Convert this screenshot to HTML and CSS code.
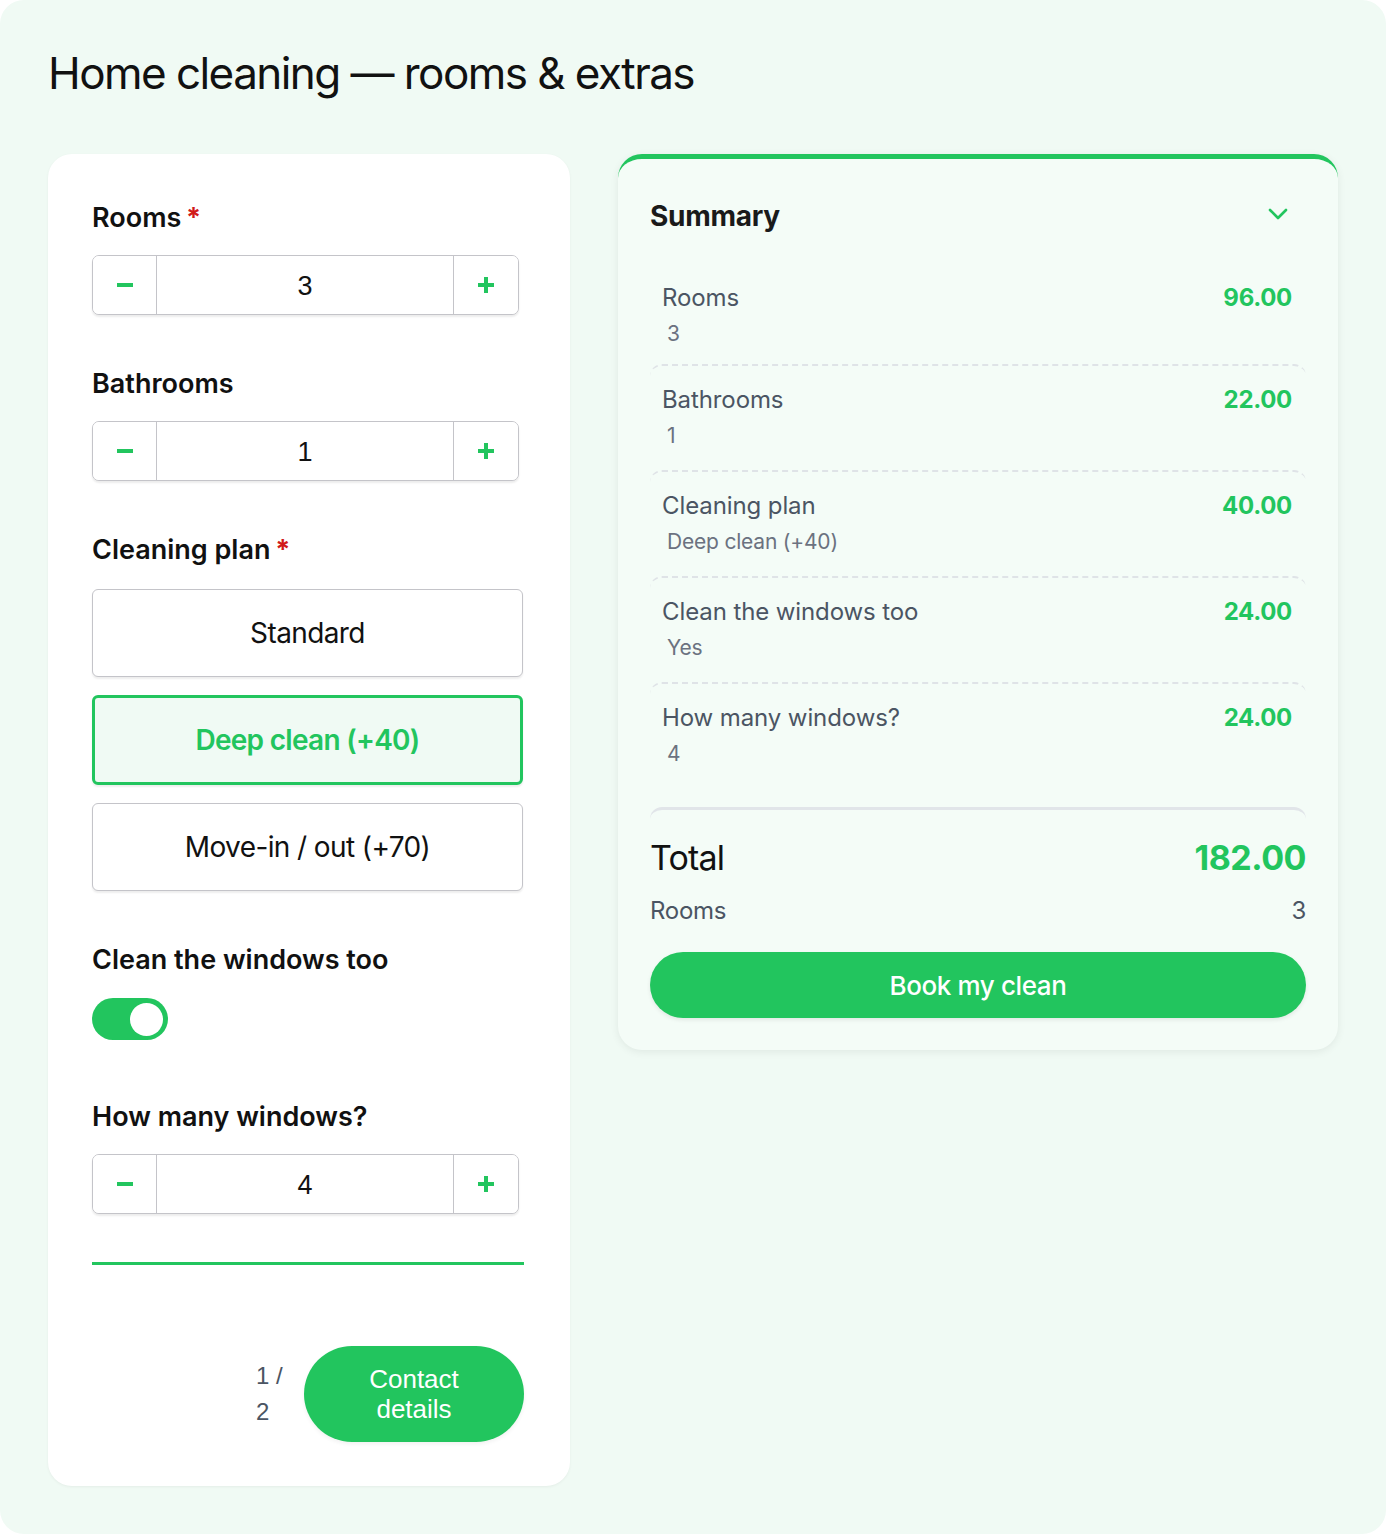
FILE: index.html
```html
<!DOCTYPE html>
<html lang="en">
<head>
<meta charset="utf-8">
<title>Home cleaning — rooms &amp; extras</title>
<link rel="stylesheet" href="styles.css">
</head>
<body>
<div class="page">
  <h1 class="title">Home cleaning — rooms &amp; extras</h1>
  <div class="layout">
    <section class="form-card">
      <div class="field">
        <div class="label">Rooms <span class="req">*</span></div>
        <div class="stepper">
          <button class="step-btn" aria-label="Decrease"><svg width="16" height="16" viewBox="0 0 16 16"><rect x="0" y="6" width="16" height="4" fill="#22c55e"/></svg></button>
          <div class="step-val">3</div>
          <button class="step-btn step-plus" aria-label="Increase"><svg width="16" height="16" viewBox="0 0 16 16"><rect x="0" y="6" width="16" height="4" fill="#22c55e"/><rect x="6" y="0" width="4" height="16" fill="#22c55e"/></svg></button>
        </div>
      </div>
      <div class="field">
        <div class="label">Bathrooms</div>
        <div class="stepper">
          <button class="step-btn" aria-label="Decrease"><svg width="16" height="16" viewBox="0 0 16 16"><rect x="0" y="6" width="16" height="4" fill="#22c55e"/></svg></button>
          <div class="step-val">1</div>
          <button class="step-btn step-plus" aria-label="Increase"><svg width="16" height="16" viewBox="0 0 16 16"><rect x="0" y="6" width="16" height="4" fill="#22c55e"/><rect x="6" y="0" width="4" height="16" fill="#22c55e"/></svg></button>
        </div>
      </div>
      <div class="field">
        <div class="label">Cleaning plan <span class="req">*</span></div>
        <div class="options">
          <div class="option">Standard</div>
          <div class="option option-selected">Deep clean (+40)</div>
          <div class="option">Move-in / out (+70)</div>
        </div>
      </div>
      <div class="field">
        <div class="label">Clean the windows too</div>
        <div class="toggle"><span class="knob"></span></div>
      </div>
      <div class="field field-windows">
        <div class="label">How many windows?</div>
        <div class="stepper">
          <button class="step-btn" aria-label="Decrease"><svg width="16" height="16" viewBox="0 0 16 16"><rect x="0" y="6" width="16" height="4" fill="#22c55e"/></svg></button>
          <div class="step-val">4</div>
          <button class="step-btn step-plus" aria-label="Increase"><svg width="16" height="16" viewBox="0 0 16 16"><rect x="0" y="6" width="16" height="4" fill="#22c55e"/><rect x="6" y="0" width="4" height="16" fill="#22c55e"/></svg></button>
        </div>
      </div>
      <div class="progress"></div>
      <div class="form-footer">
        <div class="pager">1 / 2</div>
        <button class="next-btn">Contact details</button>
      </div>
    </section>

    <aside class="summary-card">
      <div class="summary-head">
        <h2 class="summary-title">Summary</h2>
        <svg class="chevron" width="20" height="14" viewBox="0 0 20 14"><polyline points="2,3 10,11 18,3" fill="none" stroke="#22c55e" stroke-width="2.6" stroke-linecap="round" stroke-linejoin="round"/></svg>
      </div>
      <div class="items">
        <div class="item">
          <div class="item-row"><span class="item-name">Rooms</span><span class="item-price">96.00</span></div>
          <div class="item-sub">3</div>
        </div>
        <div class="item">
          <div class="item-row"><span class="item-name">Bathrooms</span><span class="item-price">22.00</span></div>
          <div class="item-sub">1</div>
        </div>
        <div class="item">
          <div class="item-row"><span class="item-name">Cleaning plan</span><span class="item-price">40.00</span></div>
          <div class="item-sub">Deep clean (+40)</div>
        </div>
        <div class="item">
          <div class="item-row"><span class="item-name">Clean the windows too</span><span class="item-price">24.00</span></div>
          <div class="item-sub">Yes</div>
        </div>
        <div class="item">
          <div class="item-row"><span class="item-name">How many windows?</span><span class="item-price">24.00</span></div>
          <div class="item-sub">4</div>
        </div>
      </div>
      <div class="totals">
        <div class="total-row"><span class="total-label">Total</span><span class="total-value">182.00</span></div>
        <div class="meta-row"><span>Rooms</span><span>3</span></div>
        <button class="book-btn">Book my clean</button>
      </div>
    </aside>
  </div>
</div>
</body>
</html>
```

FILE: styles.css
```css
* { box-sizing: border-box; }

body {
  margin: 0;
  background: #ffffff;
  font-family: Inter, "Noto Sans", sans-serif;
  color: #111111;
}

.page {
  min-height: 1534px;
  background: #f0faf4;
  border-radius: 24px;
  padding: 48px;
}

.title {
  margin: 0 0 54px;
  font-size: 44px;
  line-height: 50px;
  font-weight: 400;
  letter-spacing: -1.55px;
  color: #111111;
  padding-bottom: 2px;
}

.layout {
  display: grid;
  grid-template-columns: 522px 720px;
  gap: 48px;
  align-items: start;
}

/* ---------- form card ---------- */
.form-card {
  background: #ffffff;
  border-radius: 24px;
  padding: 44px 44px 44px;
  box-shadow: 0 1px 3px rgba(0, 0, 0, 0.05);
  display: flex;
  flex-direction: column;
}

.field {
  display: flex;
  flex-direction: column;
  gap: 17px;
  margin-bottom: 49px;
}

.label {
  font-size: 27px;
  line-height: 40px;
  font-weight: 600;
  letter-spacing: 0;
  color: #111111;
}

.req {
  color: #d11a1a;
  font-weight: 700;
  margin-left: -2px;
}

.stepper {
  display: flex;
  width: 427px;
  height: 60px;
  border: 1.5px solid #c4c4c9;
  border-radius: 7px;
  background: #ffffff;
  box-shadow: 0 2px 2px rgba(0, 0, 0, 0.08);
  overflow: hidden;
}

.step-btn {
  width: 64px;
  flex: none;
  border: 0;
  background: #ffffff;
  display: flex;
  align-items: center;
  justify-content: center;
  padding: 0;
  border-right: 1.5px solid #c4c4c9;
}

.step-plus {
  border-right: 0;
  border-left: 1.5px solid #c4c4c9;
  width: 65px;
}

.step-val {
  flex: 1;
  display: flex;
  align-items: center;
  justify-content: center;
  padding-top: 3px;
  font-family: "Liberation Sans", Arial, sans-serif;
  font-size: 27px;
  color: #111111;
}

.options {
  display: flex;
  flex-direction: column;
  gap: 18px;
  margin-top: 2px;
}

.option {
  width: 431px;
  height: 88px;
  border: 1.5px solid #c4c4c9;
  border-radius: 6px;
  background: #ffffff;
  box-shadow: 0 2px 2px rgba(0, 0, 0, 0.07);
  display: flex;
  align-items: center;
  justify-content: center;
  font-size: 28px;
  letter-spacing: -0.6px;
  color: #111111;
}

.option-selected {
  height: 90px;
  border: 3px solid #22c55e;
  background: #f0faf4;
  color: #22c55e;
  font-weight: 600;
  letter-spacing: -0.7px;
}

.toggle {
  width: 76px;
  height: 42px;
  border-radius: 21px;
  background: #22c55e;
  padding: 4px 5px;
  display: flex;
  justify-content: flex-end;
  align-items: center;
  margin-top: 1px;
  margin-bottom: 8px;
}

.knob {
  width: 33px;
  height: 33px;
  border-radius: 50%;
  background: #ffffff;
}

.field-windows {
  margin-bottom: 48px;
}

.progress {
  width: 432px;
  height: 3px;
  background: #22c55e;
}

.form-footer {
  width: 432px;
  margin-top: 81px;
  display: flex;
  justify-content: flex-end;
  align-items: center;
  gap: 20px;
}

.pager {
  width: 28px;
  flex: none;
  font-family: "Liberation Sans", Arial, sans-serif;
  font-size: 24px;
  line-height: 36px;
  color: #4b5563;
}

.next-btn {
  width: 220px;
  height: 96px;
  flex: none;
  border: 0;
  border-radius: 48px;
  background: #22c55e;
  color: #ffffff;
  font-family: "Liberation Sans", Arial, sans-serif;
  font-size: 26px;
  line-height: 30px;
  padding: 0 40px;
  box-shadow: 0 2px 4px rgba(0, 0, 0, 0.06);
}

/* ---------- summary card ---------- */
.summary-card {
  background: #f4fcf7;
  border-top: 5px solid #22c55e;
  border-radius: 24px;
  padding: 39px 32px 32px;
  box-shadow: 0 2px 8px rgba(0, 0, 0, 0.07);
}

.summary-head {
  display: flex;
  justify-content: space-between;
  align-items: center;
  height: 36px;
  padding-right: 18px;
  margin-bottom: 24px;
}

.summary-title {
  margin: 0;
  font-size: 28px;
  line-height: 36px;
  font-weight: 700;
  letter-spacing: -0.3px;
  color: #1a1a1a;
}

.chevron {
  display: block;
  margin-top: -4px;
}

.items {
  display: flex;
  flex-direction: column;
}

.item {
  padding: 18px 14px 18px 12px;
  border-top: 2px dashed #dfe3e7;
  border-radius: 12px;
}

.item:first-child {
  border-top-color: transparent;
  padding-top: 22px;
  padding-bottom: 14px;
}

.item-row {
  display: flex;
  justify-content: space-between;
  align-items: center;
  line-height: 32px;
}

.item-name {
  font-size: 24px;
  letter-spacing: -0.1px;
  color: #4b5563;
}

.item-price {
  font-size: 24px;
  font-weight: 700;
  letter-spacing: -0.3px;
  color: #22c55e;
}

.item-sub {
  margin-top: 4px;
  padding-left: 5px;
  font-size: 21px;
  line-height: 32px;
  letter-spacing: -0.2px;
  color: #6b7280;
}

.totals {
  margin-top: 19px;
  border-top: 3px solid #e1e5e9;
  border-radius: 12px;
  padding-top: 26px;
  display: flex;
  flex-direction: column;
}

.total-row {
  display: flex;
  justify-content: space-between;
  align-items: center;
  line-height: 44px;
}

.total-label {
  font-size: 34px;
  letter-spacing: -0.8px;
  color: #111111;
}

.total-value {
  font-size: 34px;
  font-weight: 700;
  letter-spacing: -0.5px;
  color: #22c55e;
}

.meta-row {
  margin-top: 15px;
  display: flex;
  justify-content: space-between;
  font-size: 24px;
  line-height: 32px;
  letter-spacing: -0.3px;
  color: #4b5563;
}

.book-btn {
  margin-top: 25px;
  height: 66px;
  border: 0;
  border-radius: 33px;
  background: #22c55e;
  color: #ffffff;
  font-family: Inter, "Noto Sans", sans-serif;
  font-size: 26px;
  font-weight: 500;
  letter-spacing: -0.4px;
  box-shadow: 0 2px 4px rgba(0, 0, 0, 0.08);
}
```
